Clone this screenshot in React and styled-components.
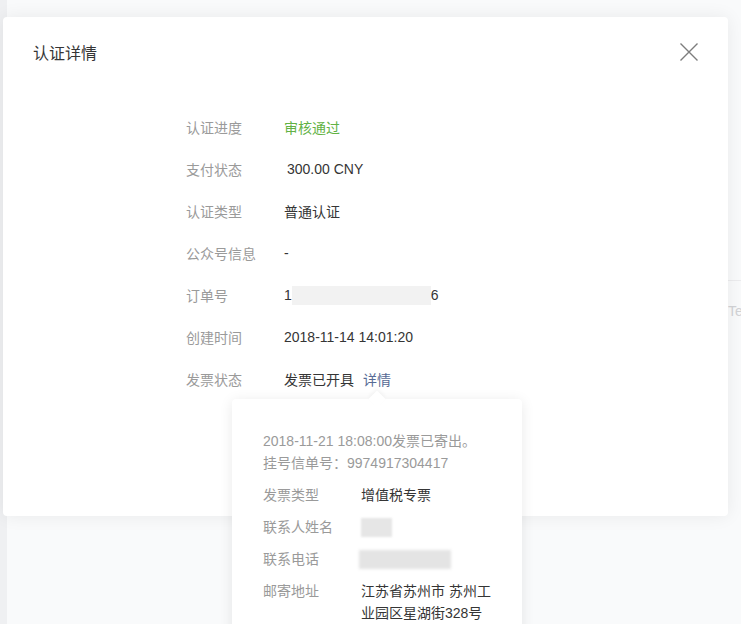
import React from 'react';
import styled, { createGlobalStyle } from 'styled-components';

const GlobalStyle = createGlobalStyle`
  html, body {
    margin: 0;
    padding: 0;
    background: #eff0f2;
  }
  body {
    font-family: 'Liberation Sans', 'Noto Sans CJK SC', sans-serif;
    -webkit-font-smoothing: antialiased;
  }
`;

const Page = styled.div`
  position: relative;
  width: 741px;
  height: 624px;
  overflow: hidden;
`;

const BackPanel = styled.div`
  margin-left: 7px;
  height: 624px;
  background: #f9fafb;
  padding-top: 280px;
  box-sizing: border-box;
`;

const BackRow = styled.div`
  border-top: 1px solid #ececee;
  padding: 22px 0 0 721px;
  font-size: 14px;
  color: #d2d3d6;
  white-space: nowrap;
`;

const Modal = styled.div`
  position: absolute;
  top: 17px;
  left: 3px;
  width: 725px;
  height: 499px;
  background: #fff;
  border-radius: 4px;
  box-shadow: 0 0 18px rgba(0, 0, 0, 0.07);
`;

const Header = styled.div`
  display: flex;
  align-items: center;
  justify-content: space-between;
  height: 70px;
  padding: 0 30px;
`;

const Title = styled.h3`
  margin: 0;
  font-size: 16px;
  font-weight: normal;
  color: #353535;
`;

const CloseButton = styled.button`
  border: none;
  background: transparent;
  padding: 0;
  width: 18px;
  height: 18px;
  cursor: pointer;
  display: flex;
`;

const Body = styled.div`
  padding: 19px 0 0 183px;
`;

const Row = styled.div`
  display: flex;
  align-items: center;
  height: 42px;
  font-size: 14px;
`;

const Label = styled.div`
  width: 98px;
  flex: none;
  color: #9a9a9a;
`;

const Value = styled.div`
  display: flex;
  align-items: center;
  color: ${(p) => (p.$status ? '#62b244' : '#353535')};
  padding-left: ${(p) => (p.$indent ? '3px' : '0')};
`;

const Masked = styled.span`
  display: inline-block;
  width: ${(p) => p.$w}px;
  height: 19px;
  margin: 0 ${(p) => p.$gap || 0}px;
  background: ${(p) => p.$tone || '#f2f2f2'};
  filter: blur(${(p) => p.$blur || 0}px);
`;

const LinkWrap = styled.span`
  position: relative;
  margin-left: 9px;
`;

const Link = styled.a`
  color: #576b95;
  text-decoration: none;
  cursor: pointer;
`;

const Popover = styled.div`
  position: absolute;
  top: 30px;
  left: 50%;
  transform: translateX(-50%);
  width: 290px;
  box-sizing: border-box;
  padding: 31px 29px 20px 31px;
  background: #fff;
  border-radius: 4px;
  box-shadow: 0 2px 14px rgba(0, 0, 0, 0.09);
  z-index: 2;

  &::before {
    content: '';
    position: absolute;
    top: -6px;
    left: 50%;
    width: 12px;
    height: 12px;
    background: #fff;
    transform: translateX(-50%) rotate(45deg);
    box-shadow: -2px -2px 4px rgba(0, 0, 0, 0.04);
  }
`;

const Info = styled.p`
  margin: 0 0 5px;
  font-size: 14px;
  line-height: 22px;
  color: #9a9a9a;
`;

const PopRow = styled.div`
  display: flex;
  align-items: flex-start;
  padding: 5px 0;
  font-size: 14px;
  line-height: 22px;
`;

const PopValue = styled.div`
  flex: 1;
  min-width: 0;
  color: #353535;
  display: flex;
  align-items: center;
  min-height: 22px;
`;

const CloseIcon = () => (
  <svg width="18" height="18" viewBox="0 0 18 18">
    <path d="M0.5 0.5 L17.5 17.5 M17.5 0.5 L0.5 17.5" stroke="#7d7d7d" strokeWidth="1.4" fill="none" />
  </svg>
);

const rows = [
  { label: '认证进度', value: '审核通过', status: true },
  { label: '支付状态', value: '300.00 CNY', indent: true },
  { label: '认证类型', value: '普通认证' },
  { label: '公众号信息', value: '-' },
];

export default function App() {
  return (
    <Page>
      <GlobalStyle />
      <BackPanel>
        <BackRow>Template</BackRow>
      </BackPanel>

      <Modal>
        <Header>
          <Title>认证详情</Title>
          <CloseButton aria-label="关闭">
            <CloseIcon />
          </CloseButton>
        </Header>
        <Body>
          {rows.map((r) => (
            <Row key={r.label}>
              <Label>{r.label}</Label>
              <Value $status={r.status} $indent={r.indent}>{r.value}</Value>
            </Row>
          ))}
          <Row>
            <Label>订单号</Label>
            <Value>
              1<Masked $w={139} />6
            </Value>
          </Row>
          <Row>
            <Label>创建时间</Label>
            <Value>2018-11-14 14:01:20</Value>
          </Row>
          <Row>
            <Label>发票状态</Label>
            <Value>
              发票已开具
              <LinkWrap>
                <Link>详情</Link>
                <Popover>
                  <Info>
                    2018-11-21 18:08:00发票已寄出。
                    <br />
                    挂号信单号：9974917304417
                  </Info>
                  <PopRow>
                    <Label>发票类型</Label>
                    <PopValue>增值税专票</PopValue>
                  </PopRow>
                  <PopRow>
                    <Label>联系人姓名</Label>
                    <PopValue>
                      <Masked $w={31} $tone="#e6e6e6" $blur={0.8} />
                    </PopValue>
                  </PopRow>
                  <PopRow>
                    <Label>联系电话</Label>
                    <PopValue>
                      <Masked $w={92} $tone="#e4e4e4" $blur={1.5} $gap={-2} />
                    </PopValue>
                  </PopRow>
                  <PopRow>
                    <Label>邮寄地址</Label>
                    <PopValue>江苏省苏州市 苏州工业园区星湖街328号</PopValue>
                  </PopRow>
                </Popover>
              </LinkWrap>
            </Value>
          </Row>
        </Body>
      </Modal>
    </Page>
  );
}
